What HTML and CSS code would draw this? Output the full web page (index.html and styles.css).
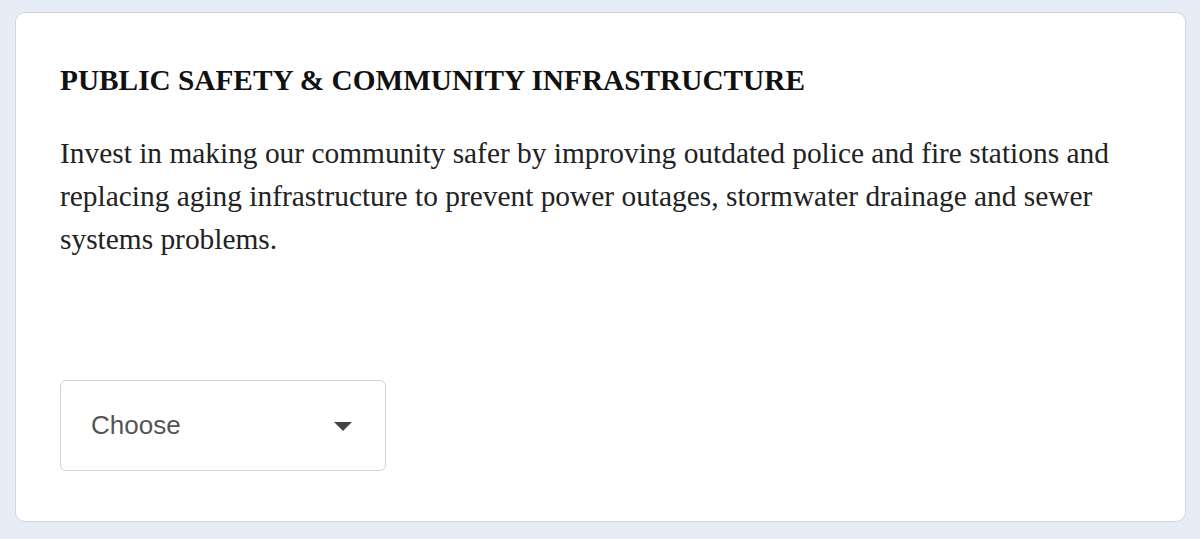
FILE: index.html
```html
<!DOCTYPE html>
<html>
<head>
<meta charset="utf-8">
<link rel="stylesheet" href="styles.css">
</head>
<body>
<div class="page">
  <div class="card">
    <h2 class="title">PUBLIC SAFETY &amp; COMMUNITY INFRASTRUCTURE</h2>
    <p class="desc">Invest in making our community safer by improving outdated police and fire stations and replacing aging infrastructure to prevent power outages, stormwater drainage and sewer systems problems.</p>
    <div class="select">
      <span class="select-label">Choose</span>
      <svg class="caret" width="20" height="10" viewBox="0 0 20 10"><path d="M1 1 L19 1 L10 10 Z" fill="#444"/></svg>
    </div>
  </div>
</div>
</body>
</html>
```
FILE: styles.css
```css
html, body {
  margin: 0;
  padding: 0;
  background: #e7edf6;
}
.page {
  padding: 12px 14px 17px 15px;
  height: 539px;
  box-sizing: border-box;
}
.card {
  background: #fff;
  border: 1px solid #d3d8de;
  border-radius: 10px;
  height: 100%;
  box-sizing: border-box;
  padding: 49px 44px 0 44px;
}
.title {
  margin: 0;
  font-family: "Liberation Serif", "Times New Roman", serif;
  font-weight: bold;
  font-size: 29.3px;
  line-height: 36px;
  color: #111;
}
.desc {
  margin: 34px 0 0 0;
  font-family: "Liberation Serif", "Times New Roman", serif;
  font-size: 29.4px;
  line-height: 43px;
  color: #222;
  max-width: 1075px;
}
.select {
  margin-top: 119px;
  width: 326px;
  height: 91px;
  box-sizing: border-box;
  border: 1px solid #cfd3d8;
  border-radius: 6px;
  display: flex;
  align-items: center;
  justify-content: space-between;
  padding: 0 32px 0 30px;
}
.select-label {
  font-family: "Liberation Sans", Arial, sans-serif;
  font-size: 26px;
  color: #555;
}
.caret {
  display: block;
}
```
